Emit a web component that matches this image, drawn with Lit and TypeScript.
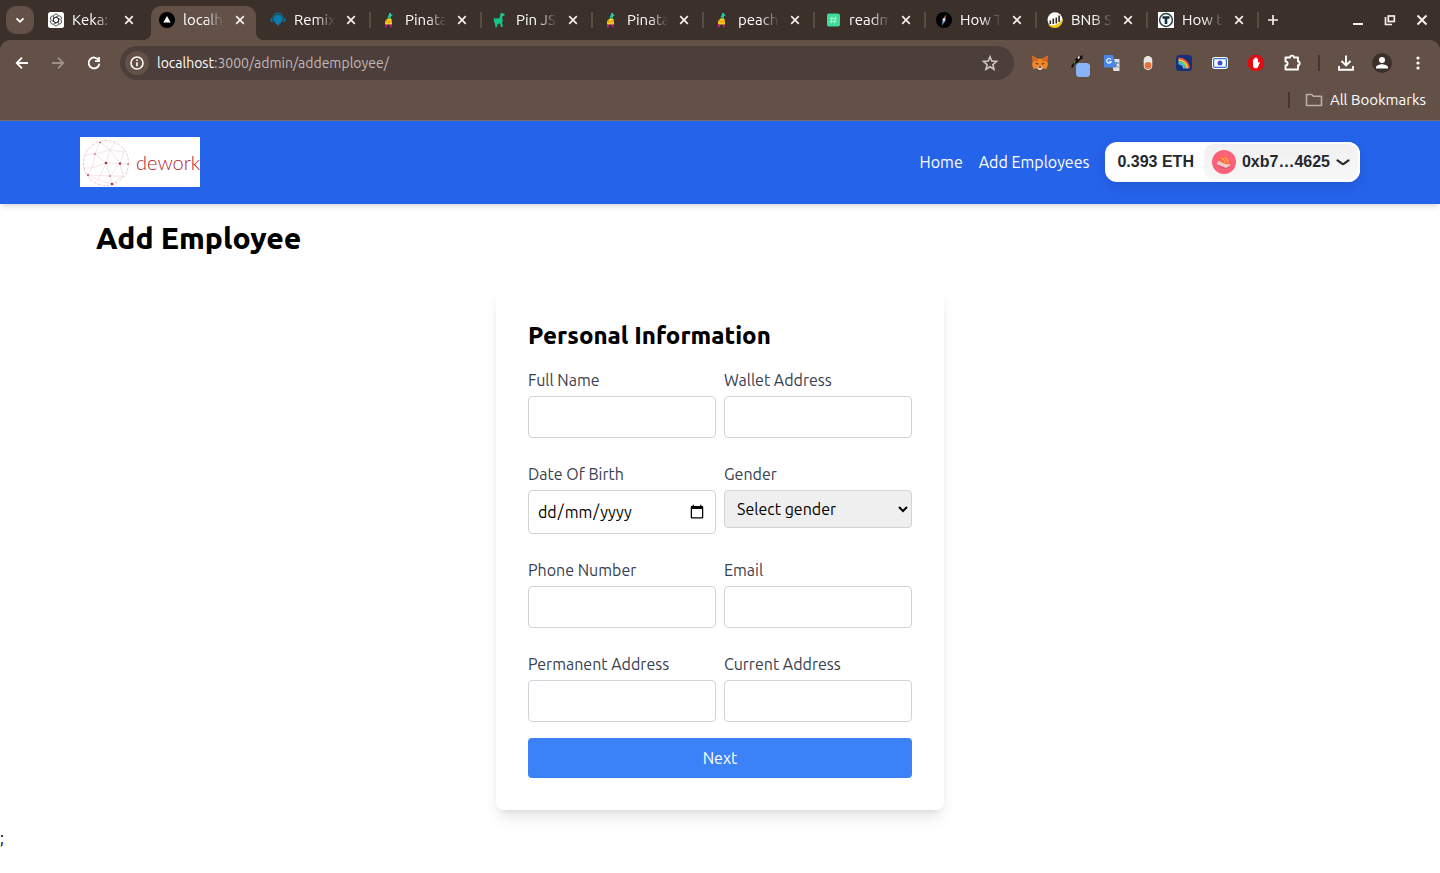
import { LitElement, html, css, svg, TemplateResult } from "lit";
import { customElement, property } from "lit/decorators.js";
import { classMap } from "lit/directives/class-map.js";

const closeIcon = html`<svg width="16" height="16" viewBox="0 0 16 16"><path d="M4.200 4.200l7.600 7.600M11.800 4.200l-7.600 7.600" stroke="#f6efec" stroke-width="1.700"/></svg>`;

const pinata = html`<svg width="16" height="16" viewBox="0 0 16 16">
  <path d="M8 1h2v1.500h1.300v1.500H10v1.500H7V3.500h1z" fill="#27c6b0"/>
  <path d="M6.500 5.500H10V7H6.500z" fill="#57b947"/>
  <path d="M5.500 7h5v2h-5z" fill="#f5d91b"/>
  <path d="M4 8.500h7V11H4z" fill="#f8a01c"/>
  <path d="M4 10.500h7v2H4z" fill="#f0d020"/>
  <path d="M4 12h2.200v1.300H4zM8.800 12H11v1.300H8.800z" fill="#ef4a44"/>
  <path d="M4 13.200h1.800v2H4zM9 13.200h1.600v2H9z" fill="#b41fb4"/>
</svg>`;

const gpt = html`<svg width="16" height="16" viewBox="0 0 16 16"><rect width="16" height="16" rx="2.500" fill="#fff"/>
  <g fill="none" stroke="#222" stroke-width=".75">${[0, 60, 120, 180, 240, 300].map(
    (a) => svg`<path transform="rotate(${a} 8 8)" d="M5.500 6.900V4.500a2.500 2.500 0 0 1 4.600-1.300M8.200 5.200l2.300 1.300v2.900"/>`
  )}</g></svg>`;

const vercel = html`<svg width="16" height="16" viewBox="0 0 16 16"><circle cx="8" cy="8" r="8" fill="#000"/><path d="M8 4l3.700 6.500H4.300z" fill="#fff"/></svg>`;

const remix = html`<svg width="16" height="16" viewBox="0 0 16 16">
  <path d="M3 5.500C3.600 2.600 5.600 1 8 1s4.400 1.600 5 4.500" fill="none" stroke="#0d7fb0" stroke-width="1"/>
  <path d="M8 2.500a4.600 4.600 0 0 1 4.600 4.700c0 2.600-2 3.600-3.100 4.800L8 14l-1.500-2C5.400 10.800 3.400 9.800 3.400 7.200A4.600 4.600 0 0 1 8 2.500z" fill="#0b7bab"/>
  <path d="M2.700 5.800v4.400C1.100 10.100.2 9.200.2 8s.9-2.100 2.500-2.200zM13.300 5.800v4.400c1.600-.1 2.500-1 2.500-2.200s-.9-2.100-2.500-2.200z" fill="#0d6f9b"/>
</svg>`;

const llama = html`<svg width="16" height="16" viewBox="0 0 16 16"><path fill="#19c48c" d="M8.700 1.300L10 .8l.8.700 1.500.3.400 1.400-1 .9-1.400.1v2.300l.5 2.500-.7 2 .7 4h-1.800l-1-3.500-1.600.3-1.100.8-.3 2.700H3.400L2.900 11l-1-1.200V6.300l1-.9.500 1.500 1.700-.6 2.200.2z"/></svg>`;

const gem = html`<svg width="16" height="16" viewBox="0 0 16 16"><rect x="2" y="1.500" width="13" height="13" rx="2" fill="#3ddc97"/><path d="M7 4.500l-1 7M10.500 4.500l-1 7M5 6.700h7M4.500 9.500h7" stroke="#a5f7d3" stroke-width="1"/></svg>`;

const bolt = html`<svg width="16" height="16" viewBox="0 0 16 16"><circle cx="8" cy="8" r="8" fill="#000"/><path d="M10.500 2.300L6.200 8h2.300z" fill="#f38b8b"/><path d="M7.200 6.500h2.500L8.700 9.500H6.300z" fill="#eee"/><path d="M9.800 8.300L5.700 13.700l1.300-5.200z" fill="#6fb6e8"/></svg>`;

const bnb = html`<svg width="16" height="16" viewBox="0 0 16 16"><circle cx="8" cy="7.700" r="7.500" fill="#fff"/><path d="M2.500 8.500h1.600V12H2.500zM5.500 6.500h1.600V12H5.500zM8.500 5.500h1.600v6H8.500zM11.300 3.500h1.600v6.500h-1.600z" fill="#33291f"/><path d="M1 12.500c5 2.600 11 .3 14.800-6C16 11 13 16 8 16c-3.200 0-5.500-1.300-7-3.500z" fill="#f1c40f"/></svg>`;

const tIcon = html`<svg width="16" height="16" viewBox="0 0 16 16"><rect width="16" height="16" fill="#fff"/><circle cx="8" cy="8" r="6.400" fill="none" stroke="#26404e" stroke-width="1.500"/><path d="M4.500 4.300h7v2.400H9.300V12H6.700V6.700H4.500z" fill="#132c3a"/></svg>`;

const tabs: { title: string; icon: TemplateResult; active?: boolean; line?: boolean }[] = [
  { title: "Keka:", icon: gpt },
  { title: "localh", icon: vercel, active: true },
  { title: "Remix", icon: remix, line: true },
  { title: "Pinata", icon: pinata, line: true },
  { title: "Pin JS", icon: llama, line: true },
  { title: "Pinata", icon: pinata, line: true },
  { title: "peach", icon: pinata, line: true },
  { title: "readm", icon: gem, line: true },
  { title: "How T", icon: bolt, line: true },
  { title: "BNB S", icon: bnb, line: true },
  { title: "How t", icon: tIcon, line: true },
];

const extensions: { name: string; icon: TemplateResult }[] = [
  {
    name: "MetaMask",
    icon: html`<svg width="20" height="20" viewBox="0 0 20 20"><path d="M2 2.500l6 3.300h4l6-3.300-.8 5.500.8 3.500-1.500 4.500-4-.8-1.500 1.300H9l-1.500-1.300-4 .8L2 11.500 2.800 8z" fill="#f0862a"/><path d="M2 2.500l6 3.300-1.200 3L2.800 8zM18 2.500l-6 3.300 1.200 3 4-.8z" fill="#d8651b"/><path d="M5.500 10l2.500.3-.5 1.700zM14.500 10l-2.500.3.500 1.700z" fill="#3a2a20"/><path d="M8 13.500h4l.7 2L11 17H9l-1.700-1.500z" fill="#e6d3c3"/><path d="M9 13.500h2l.4 1.300H8.600z" fill="#222"/></svg>`,
  },
  {
    name: "Runner",
    icon: html`<svg width="28" height="28" viewBox="0 0 28 28"><g transform="translate(6 2)"><path d="M3 16l1-2 2-3 2-3.500 2-2 1.300 1L13 4.500l2.500.2-2 1.500 1.700.8-3.200 2-2.500 2.500-3 1.500L4.500 17z" fill="#0d0b0a"/><path d="M9.500 6.500l1.500-1.500 1 1.500-2 2z" fill="#e8e8e8"/><path d="M6 12.500l1.500-3" stroke="#5fae62"/></g><rect x="14" y="14" width="14" height="14" rx="3.500" fill="#8ab4f8"/></svg>`,
  },
  {
    name: "Google Translate",
    icon: html`<svg width="16" height="16" viewBox="0 0 16 16"><path d="M7 4h8.500v12H9.500z" fill="#dfe1e3"/><path d="M0 0h9l3.500 12.500H1.200A1.200 1.200 0 0 1 0 11.300z" fill="#4a86e8"/><path d="M7 4.600A2.300 2.300 0 1 0 7.200 6.700H5" fill="none" stroke="#fff" stroke-width="1.100"/><path d="M10.500 8h4.500M12.700 7v1c-.3 2-1.500 3.500-2.500 4M11.500 9.500c.8 1.500 1.800 2.400 3 2.800" stroke="#607d9b" fill="none"/></svg>`,
  },
  {
    name: "Capsule",
    icon: html`<svg width="16" height="16" viewBox="0 0 16 16"><rect x="3.700" y="1" width="8.600" height="14" rx="4.300" fill="#eae6e3"/><circle cx="8" cy="10.500" r="3.400" fill="#e8713c"/></svg>`,
  },
  {
    name: "Rainbow",
    icon: html`<svg width="16" height="16" viewBox="0 0 16 16"><rect width="16" height="16" rx="3.500" fill="#142f7c"/><g fill="none" stroke-width="1.800"><path d="M2.500 3.500a10 10 0 0 1 10.500 10" stroke="#ef4d3c"/><path d="M2.500 5.200a8.400 8.400 0 0 1 8.800 8.300" stroke="#fbd533"/><path d="M2.500 6.900a6.800 6.800 0 0 1 7.100 6.600" stroke="#5bd08a"/><path d="M2.500 8.500a5.200 5.200 0 0 1 5.500 5" stroke="#56b7ee"/></g></svg>`,
  },
  {
    name: "Screen recorder",
    icon: html`<svg width="18" height="16" viewBox="0 0 18 16"><rect x="1" y="2" width="16" height="12" rx="3" fill="#fff"/><rect x="2.600" y="3.600" width="12.800" height="8.800" rx="1.500" fill="none" stroke="#3173d8" stroke-width="1.300"/><circle cx="9" cy="8" r="2.500" fill="#3b50d8"/></svg>`,
  },
  {
    name: "Ad blocker",
    icon: html`<svg width="18" height="18" viewBox="0 0 18 18"><path d="M5.700 1h6.600L17 5.700v6.600L12.300 17H5.700L1 12.300V5.700z" fill="#e30b12"/><path d="M6 9V5.800c0-.8 1.200-.8 1.200 0V4.500c0-.9 1.300-.9 1.300 0V4c0-.9 1.300-.9 1.300 0v1c0-.8 1.200-.8 1.200 0v4l.8-.9c.6-.5 1.300 0 1 .7l-1.700 4c-.5 1-1.300 1.500-2.400 1.500C7 14.300 6 13 6 11.500z" fill="#fff"/></svg>`,
  },
  {
    name: "Extensions",
    icon: html`<svg width="20" height="20" viewBox="0 0 20 20"><path d="M3.500 4.500h4.500c0-2.500 4-2.500 4 0H16V8.500c2.200 0 2.200 3.800 0 3.800V16.500H3.500v-4c2.800 0 2.800-4 0-4z" fill="none" stroke="#fff" stroke-width="1.900" stroke-linejoin="round"/></svg>`,
  },
];

@customElement("browser-chrome")
export class BrowserChrome extends LitElement {
  static styles = css`
    :host {
      display: block;
      font-family: Ubuntu, "Noto Sans", sans-serif;
      color: #fff;
      background: #3c302b;
    }
    button {
      display: grid;
      place-items: center;
      padding: 0;
      border: 0;
      background: none;
      color: inherit;
      font: inherit;
    }
    svg { display: block; flex: none; }
    .strip {
      display: flex;
      align-items: center;
      height: 40px;
      padding: 0 2px 0 6px;
    }
    .search {
      flex: none;
      width: 28px;
      height: 28px;
      margin-right: 6px;
      border-radius: 10px;
      background: #635147;
    }
    .tabs { display: flex; gap: 6px; min-width: 0; align-self: stretch; }
    .tab {
      position: relative;
      display: flex;
      align-items: center;
      box-sizing: border-box;
      width: 105px;
      min-width: 40px;
      margin-top: 6px;
      padding: 0 8px 6px;
      font-size: 15px;
      line-height: 20px;
    }
    .tab.active { background: #635147; border-radius: 10px 10px 0 0; }
    .tab.active::before,
    .tab.active::after {
      content: "";
      position: absolute;
      bottom: 0;
      width: 8px;
      height: 8px;
    }
    .tab.active::before { right: 100%; background: radial-gradient(circle at 0 0, transparent 8px, #635147 8px); }
    .tab.active::after { left: 100%; background: radial-gradient(circle at 100% 0, transparent 8px, #635147 8px); }
    .tab.line::after {
      content: "";
      position: absolute;
      left: 100%;
      top: 6px;
      width: 2px;
      height: 16px;
      margin-left: 2px;
      background: #5b4b43;
    }
    .title {
      flex: 1;
      min-width: 0;
      margin: 0 0 0 8px;
      white-space: nowrap;
      mask-image: linear-gradient(90deg, #000 22px, transparent 41px);
      -webkit-mask-image: linear-gradient(90deg, #000 22px, transparent 41px);
    }
    .new { width: 28px; height: 28px; margin-left: 4px; }
    .window { display: flex; margin-left: auto; }
    .window button { width: 32px; height: 32px; }
    .toolbar { background: #635147; border-radius: 10px 10px 0 0; border-bottom: 1px solid #7d6d65; }
    .row { display: flex; align-items: center; height: 46px; padding: 0 4px; }
    .tool { flex: none; width: 36px; height: 36px; }
    .omnibox {
      display: flex;
      align-items: center;
      flex: 1;
      height: 34px;
      margin: 0 8px;
      padding: 0 14px 0 5px;
      box-sizing: border-box;
      border-radius: 17px;
      background: #4c3e3b;
      font-size: 14px;
    }
    .info { width: 24px; height: 24px; border-radius: 50%; background: #635147; }
    .url { flex: 1; margin-left: 8px; color: #c4b9b5; }
    .url b { font-weight: inherit; color: #fff; }
    .divider { width: 2px; height: 16px; margin: 0 8px; background: #45372f; }
    .bookmarks {
      display: flex;
      justify-content: flex-end;
      align-items: center;
      height: 28px;
      padding: 0 14px 6px 0;
      font-size: 15px;
    }
    .bookmarks .divider { margin: 0 16px 0 0; }
    .all { display: flex; align-items: center; gap: 8px; }
  `;

  render() {
    return html`
      <div class="strip">
        <button class="search" aria-label="Search tabs">
          <svg width="16" height="16" viewBox="0 0 16 16"><path d="M4.500 6.300L8 9.800l3.500-3.500" fill="none" stroke="#fff" stroke-width="1.800"/></svg>
        </button>
        <div class="tabs">
          ${tabs.map(
            (t) => html`<div class=${classMap({ tab: true, active: !!t.active, line: !!t.line })}>
              ${t.icon}<span class="title">${t.title}</span>
              <button aria-label="Close tab">${closeIcon}</button>
            </div>`
          )}
        </div>
        <button class="new" aria-label="New tab">
          <svg width="16" height="16" viewBox="0 0 16 16"><path d="M8 3v10M3 8h10" stroke="#f6efec" stroke-width="1.700"/></svg>
        </button>
        <div class="window">
          <button aria-label="Minimise"><svg width="16" height="16" viewBox="0 0 16 16"><path d="M3 12h10" stroke="#f6efec" stroke-width="2"/></svg></button>
          <button aria-label="Restore"><svg width="16" height="16" viewBox="0 0 16 16"><g fill="none" stroke="#f6efec" stroke-width="1.700"><path d="M3.500 5v7.500H10"/><rect x="6.300" y="4" width="6" height="5.500"/></g></svg></button>
          <button aria-label="Close"><svg width="16" height="16" viewBox="0 0 16 16"><path d="M3.500 3.500l9 9M12.500 3.500l-9 9" stroke="#f6efec" stroke-width="2"/></svg></button>
        </div>
      </div>
      <div class="toolbar">
        <div class="row">
          <button class="tool" aria-label="Back"><svg width="16" height="16" viewBox="0 0 16 16"><path d="M14 8H3M8 2.700L2.700 8 8 13.300" fill="none" stroke="#fff" stroke-width="1.800"/></svg></button>
          <button class="tool" aria-label="Forward"><svg width="16" height="16" viewBox="0 0 16 16"><path d="M2 8h11M8 2.700L13.300 8 8 13.300" fill="none" stroke="#9d9089" stroke-width="1.800"/></svg></button>
          <button class="tool" aria-label="Reload"><svg width="16" height="16" viewBox="0 0 16 16"><path d="M12.700 5.200A5.400 5.400 0 1 0 13.400 8.600" fill="none" stroke="#fff" stroke-width="1.800"/><path d="M13.900 1.900v5H8.900V5.200h3.300V1.900z" fill="#fff"/></svg></button>
          <div class="omnibox">
            <button class="info" aria-label="Site information"><svg width="16" height="16" viewBox="0 0 16 16"><circle cx="8" cy="8" r="6" fill="none" stroke="#fff" stroke-width="1.600"/><path d="M8 7.200v4M8 4.600v1.500" stroke="#fff" stroke-width="1.600"/></svg></button>
            <span class="url"><b>localhost</b>:3000/admin/addemployee/</span>
            <button aria-label="Bookmark this tab"><svg width="20" height="20" viewBox="0 0 20 20"><path d="M10 3.800l1.800 4.300 4.700.4-3.600 3.100 1.100 4.600-4-2.500-4 2.500 1.100-4.600-3.600-3.100 4.700-.4z" fill="none" stroke="#cfc5c1" stroke-width="1.600"/></svg></button>
          </div>
          ${extensions.map((e) => html`<button class="tool" aria-label=${e.name}>${e.icon}</button>`)}
          <span class="divider"></span>
          <button class="tool" aria-label="Downloads"><svg width="18" height="18" viewBox="0 0 18 18"><path d="M9 1.500v9.500M4.500 7L9 11.500 13.500 7M2 12v3.700h14V12" fill="none" stroke="#fff" stroke-width="1.900"/></svg></button>
          <button class="tool" aria-label="Profile"><svg width="20" height="20" viewBox="0 0 20 20"><circle cx="10" cy="10" r="10" fill="#3c302b"/><circle cx="10" cy="7" r="3" fill="#fff"/><path d="M4 15.500v-1.200c0-2 4-3 6-3s6 1 6 3v1.200z" fill="#fff"/></svg></button>
          <button class="tool" aria-label="Menu"><svg width="16" height="16" viewBox="0 0 16 16"><g fill="#fff"><circle cx="8" cy="3" r="1.600"/><circle cx="8" cy="8" r="1.600"/><circle cx="8" cy="13" r="1.600"/></g></svg></button>
        </div>
        <div class="bookmarks">
          <span class="divider"></span>
          <button class="all">
            <svg width="16" height="16" viewBox="0 0 16 16" overflow="visible"><path d="M.500 2.500h5.200l1.700 1.800h8.100v9.200H.500z" fill="none" stroke="#b9aea8" stroke-width="1.600" stroke-linejoin="round"/></svg>
            <span>All Bookmarks</span>
          </button>
        </div>
      </div>
    `;
  }
}

@customElement("dework-logo")
export class DeworkLogo extends LitElement {
  static styles = css`
    :host { display: flex; align-items: center; width: 120px; height: 50px; background: #fff; }
    svg { flex: none; margin-left: 2px; }
    span {
      margin-left: 6px;
      font: 300 20px/24px Lato, sans-serif;
      color: #b5222c;
    }
  `;
  render() {
    return html`
      <svg width="48" height="49" viewBox="0 0 48 49">
        <circle cx="24" cy="25" r="22.500" fill="none" stroke="#dfb0b3" stroke-width=".7" stroke-dasharray="3 1.500"/>
        <path d="M24 25L38 25.500M24 25L13 16M24 25L28 12M24 25L10 30M24 25L28 38M24 25L16 42M13 16L18 4M13 16L28 12M28 12L18 4M28 12L33 5M28 12L38 25.500M28 12L42 14M38 25.500L42 14M38 25.500L46 26M38 25.500L28 38M38 25.500L41 38M28 38L30 46M28 38L41 38M28 38L6 37M10 30L13 16M10 30L2 30M10 30L6 37M16 42L6 37M13 16L4 17M16 42L30 46M30 46L41 38" fill="none" stroke="#e8c8ca" stroke-width=".5"/>
        <g fill="#a8343d"><circle cx="24" cy="25" r="1.300"/><circle cx="38" cy="25.500" r="1.200"/><circle cx="30" cy="46" r="1.300"/><circle cx="6" cy="37" r=".9"/><circle cx="18" cy="4.500" r=".8"/><circle cx="13" cy="16" r=".7"/><circle cx="28" cy="38" r=".7"/><circle cx="46" cy="26" r=".7"/></g>
      </svg>
      <span>dework</span>
    `;
  }
}

@customElement("site-header")
export class SiteHeader extends LitElement {
  static styles = css`
    :host {
      display: flex;
      align-items: center;
      justify-content: space-between;
      padding: 16px 80px 17px;
      background: #2563eb;
      box-shadow: 0 4px 6px -1px rgb(0 0 0 / 0.1), 0 2px 4px -2px rgb(0 0 0 / 0.1);
    }
    nav { display: flex; align-items: center; gap: 16px; }
    a { color: #fff; text-decoration: none; }
    .wallet {
      display: flex;
      align-items: center;
      box-sizing: border-box;
      height: 40px;
      padding: 0 0 0 12px;
      border: 0;
      border-radius: 12px;
      background: #fff;
      box-shadow: 0 4px 12px rgb(0 0 0 / 0.1);
      color: #25292e;
      font: 700 16px/20px "Liberation Sans", Arial, sans-serif;
    }
    .account {
      display: flex;
      align-items: center;
      gap: 6px;
      box-sizing: border-box;
      height: 40px;
      margin-left: 8px;
      padding: 0 8px;
      border: 2px solid #fff;
      border-radius: 12px;
      background: linear-gradient(#f0f0f1, #f8f8f8);
    }
    .account svg { display: block; }
  `;
  render() {
    return html`
      <a href="#" aria-label="dework"><dework-logo></dework-logo></a>
      <nav>
        <a href="#">Home</a>
        <a href="#">Add Employees</a>
        <button class="wallet">
          <span>0.393 ETH</span>
          <span class="account">
            <svg width="24" height="24" viewBox="0 0 24 24"><circle cx="12" cy="12" r="12" fill="#fb6277"/><path d="M5 12.500l2-2 10.500 3.500 1 1.500-2 2.500-2.500.8L7 16l-2-1.800z" fill="#f3c6c9"/><path d="M5 14.300l9 3.800 4.500-2.600-.3 1.700-3.800 2.300L7 16.800z" fill="#d35a72"/><path d="M6.500 9.500C8.500 6.500 12 5.500 15 7.500c2.200 1.500 3.300 4 3.500 6.500-3.500.8-10-.8-12-4.500z" fill="#f9713a"/><path d="M9.500 8.300c2 .2 3.500 2 3.700 4.500M12.500 7.300c2 .6 3.300 2.700 3.500 5.500" fill="none" stroke="#fdb18a" stroke-width=".9"/></svg>
            <span>0xb7…4625</span>
            <svg width="14" height="7" viewBox="0 0 14 7"><path d="M1.500 1.300L6 4.700c.6.400 1.400.4 2 0l4.500-3.400" fill="none" stroke="#25292e" stroke-width="2.200" stroke-linecap="round"/></svg>
          </span>
        </button>
      </nav>
    `;
  }
}

@customElement("form-field")
export class FormField extends LitElement {
  @property() label = "";
  @property() kind = "text";

  static styles = css`
    :host { display: block; margin-bottom: 16px; }
    label { display: block; color: #374151; }
    input,
    select {
      display: block;
      box-sizing: border-box;
      width: 100%;
      margin: 4px 0 0;
      padding: 8px;
      border: 1px solid #d1d5db;
      border-radius: 4px;
      color: #000;
      font: inherit;
    }
    input { height: 42px; background: #fff; }
    input[type="date"] { height: 44px; }
    select { height: 38px; background: #efefef; }
    ::-webkit-datetime-edit { padding: 0; }
    ::-webkit-datetime-edit-fields-wrapper {
      display: inline-grid;
      grid-template-columns: repeat(5, auto);
      padding: 0;
    }
    ::-webkit-datetime-edit-day-field { grid-area: 1 / 1; }
    ::-webkit-datetime-edit-month-field { grid-area: 1 / 3; }
    ::-webkit-datetime-edit-year-field { grid-area: 1 / 5; }
  `;

  control() {
    if (this.kind === "select")
      return html`<select id="c"><option>Select gender</option><option>Male</option><option>Female</option></select>`;
    return html`<input id="c" type=${this.kind} lang="en-GB" />`;
  }

  render() {
    return html`<label for="c">${this.label}</label>${this.control()}`;
  }
}

const fields = [
  ["Full Name", "text"],
  ["Wallet Address", "text"],
  ["Date Of Birth", "date"],
  ["Gender", "select"],
  ["Phone Number", "tel"],
  ["Email", "email"],
  ["Permanent Address", "text"],
  ["Current Address", "text"],
];

@customElement("app-root")
export class AppRoot extends LitElement {
  static styles = css`
    :host {
      display: block;
      min-height: 100vh;
      background: #fff;
      color: #000;
      font: 450 16px/24px Ubuntu, "Noto Sans", sans-serif;
    }
    main { padding: 16px 96px; }
    h1,
    h2 { font-weight: 800; }
    h1 { margin: 0 0 32px; font-size: 30px; line-height: 36px; }
    .card {
      box-sizing: border-box;
      max-width: 448px;
      margin: 0 auto;
      padding: 32px;
      border-radius: 8px;
      background: #fff;
      box-shadow: 0 10px 15px -3px rgb(0 0 0 / 0.1), 0 4px 6px -4px rgb(0 0 0 / 0.1);
    }
    h2 { margin: 0 0 16px; font-size: 24px; line-height: 32px; }
    .grid { display: grid; grid-template-columns: 1fr 1fr; gap: 8px; }
    .next {
      display: block;
      width: 100%;
      padding: 8px;
      border: 0;
      border-radius: 4px;
      background: #3b82f6;
      color: #fff;
      font: inherit;
    }
  `;

  render() {
    return html`
      <browser-chrome></browser-chrome>
      <site-header></site-header>
      <main>
        <h1>Add Employee</h1>
        <form class="card">
          <h2>Personal Information</h2>
          <div class="grid">
            ${fields.map(([label, kind]) => html`<form-field label=${label} kind=${kind}></form-field>`)}
          </div>
          <button class="next" type="button">Next</button>
        </form>
      </main>
      <div>;</div>
    `;
  }
}
